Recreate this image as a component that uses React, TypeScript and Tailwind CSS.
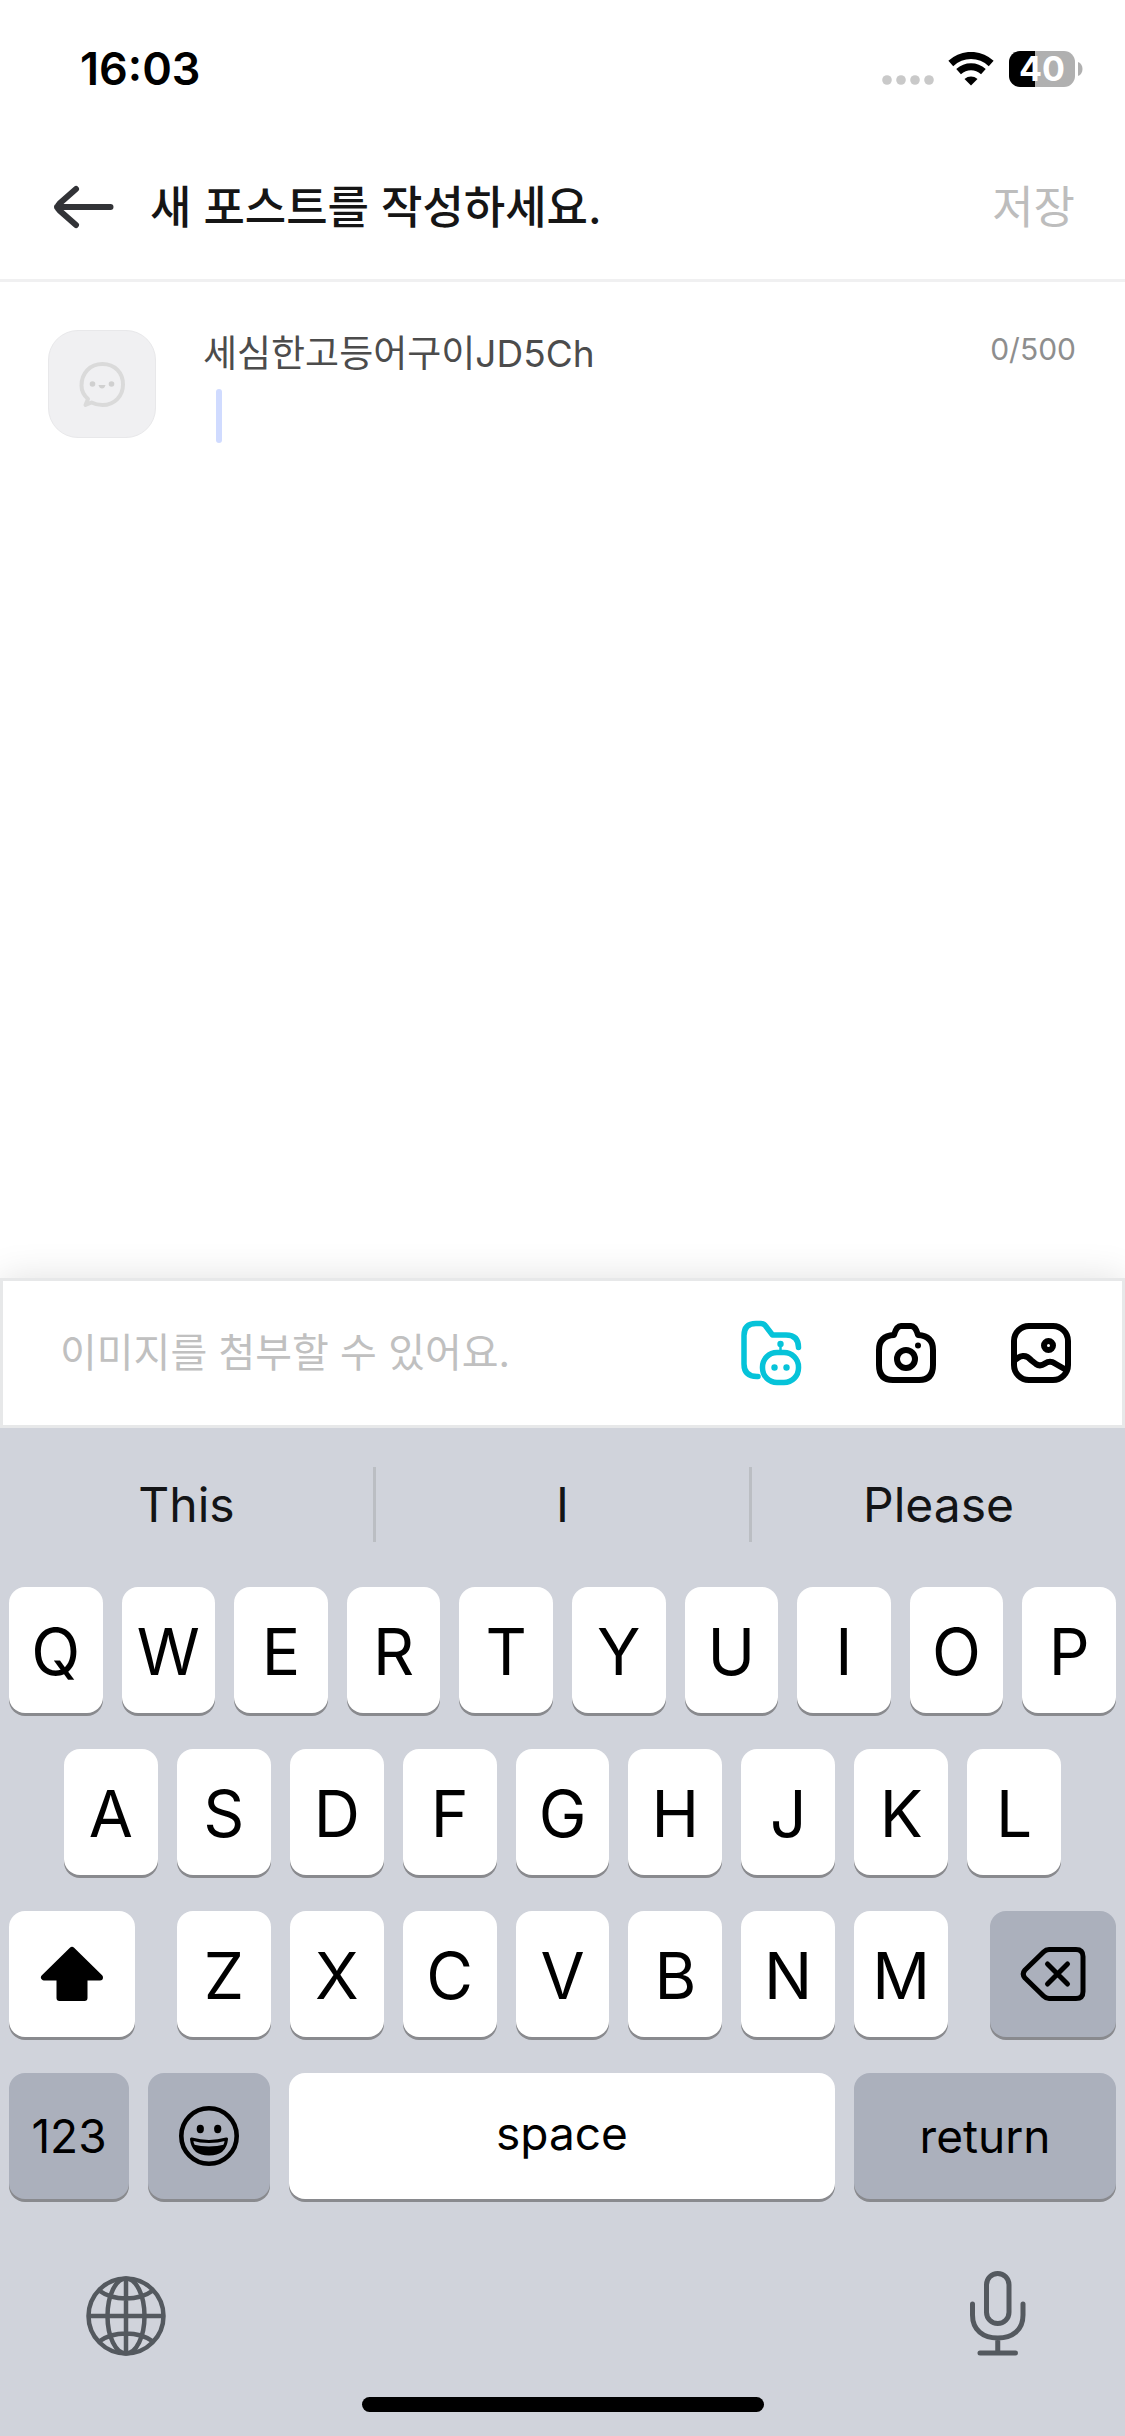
import React, { useState } from 'react';

const keyBase = "h-[126px] rounded-2xl flex items-center justify-center text-black shadow-[0_3px_0_#898a8e]";
const lightKey = `${keyBase} bg-white`;
const darkKey = `${keyBase} bg-[#abb0bc]`;

const topRow = ['Q', 'W', 'E', 'R', 'T', 'Y', 'U', 'I', 'O', 'P'];
const middleRow = ['A', 'S', 'D', 'F', 'G', 'H', 'J', 'K', 'L'];
const bottomRow = ['Z', 'X', 'C', 'V', 'B', 'N', 'M'];
const suggestions = ['This', 'I', 'Please'];

const StatusBar = () => (
  <div className="h-[137px] pl-20 pr-[42px] flex items-center justify-between">
    <span className="text-[45px] leading-[54px] font-semibold text-black">16:03</span>
    <div className="flex items-center">
      <svg width="52" height="36" viewBox="0 0 52 36" fill="#c9c9c9" className="mr-3.5" aria-hidden="true">
        <circle cx="5" cy="29" r="4.8" />
        <circle cx="19" cy="29" r="4.8" />
        <circle cx="33" cy="29" r="4.8" />
        <circle cx="47" cy="29" r="4.8" />
      </svg>
      <svg width="46" height="34" viewBox="0 0 46 34" fill="none" stroke="#000" className="mr-[15px]" aria-hidden="true">
        <path d="M2.8 11.5C14.5 .8 31.500 .8 43.200 11.500" strokeWidth="7.200" />
        <path d="M10.600 19.700C18 13 28 13 35.400 19.700" strokeWidth="7" />
        <path d="M23 33.500L16.500 27C20.300 23.700 25.700 23.700 29.500 27Z" fill="#000" stroke="none" />
      </svg>
      <div className="w-[66px] h-9 rounded-[11px] bg-linear-to-r from-black from-40% to-[#b0b0b0] to-40% text-white text-[34px] leading-9 font-bold text-center">40</div>
      <svg width="5" height="14" viewBox="0 0 5 14" fill="#b0b0b0" className="ml-[3px]" aria-hidden="true">
        <path d="M0 0C6 2 6 12 0 14Z" />
      </svg>
    </div>
  </div>
);

const Header = () => (
  <header className="h-[145px] pl-[51px] pr-[50px] flex items-center border-b-[3px] border-[#f0f0f1]">
    <button aria-label="뒤로">
      <svg width="66" height="48" viewBox="0 1 66 48" fill="none" stroke="#323337" strokeWidth="6" strokeLinecap="round" strokeLinejoin="round">
        <path d="M59.500 24H6M25 6L8.500 20.500Q5 24 8.500 27.500L25 42" />
      </svg>
    </button>
    <h1 className="ml-[33px] text-[45px] leading-[60px] font-medium text-[#151515]">새 포스트를 작성하세요.</h1>
    <button className="ml-auto text-[45px] leading-[60px] text-[#bdbdbd]">저장</button>
  </header>
);

const Avatar = () => (
  <div className="size-27 shrink-0 rounded-[30px] bg-[#f0f0f2] border border-[#e8e8ea] flex items-center justify-center">
    <svg width="48" height="48" viewBox="0 0 48 48" fill="none" stroke="#dadada" aria-hidden="true">
      <path d="M10 39C5.500 35 3.500 31 3.500 25.500C3.500 13 12 4 24.500 4S45 13 45 24.500S36.500 45 24.500 45C20 45 16.500 44 13.500 42.500L7.500 45Z" strokeWidth="4" strokeLinejoin="round" />
      <g fill="#d0d0d0" stroke="none">
        <circle cx="14.500" cy="24" r="2.800" />
        <circle cx="33.500" cy="24" r="2.800" />
        <path d="M20.500 25h7q-1 3.500-3.500 3.500t-3.500-3.500Z" />
      </g>
    </svg>
  </div>
);

const FolderIcon = () => (
  <svg width="66" height="66" viewBox="-3 -1 66 66" fill="none" stroke="#06c3d9" strokeWidth="5.500" strokeLinecap="round" strokeLinejoin="round">
    <path d="M17 55.500H16Q3 55.500 3 43V14.500Q3 2.500 15 2.500H20Q23 2.500 25 5.500L31.500 14H45Q57.500 14 57.500 26.500" />
    <rect x="21.500" y="31.500" width="36" height="30" rx="14.500" />
    <path d="M39.500 23V31" strokeWidth="2.500" />
    <g fill="#06c3d9" stroke="none">
      <circle cx="39.500" cy="23" r="3.200" />
      <circle cx="33.500" cy="46.500" r="3.200" />
      <circle cx="45.500" cy="46.500" r="3.200" />
    </g>
  </svg>
);

const CameraIcon = () => (
  <svg width="66" height="66" viewBox="0 0 66 66" fill="none" stroke="#000" strokeWidth="6" strokeLinejoin="round">
    <path d="M21 15Q23.500 6 28 6H38Q42.500 6 45 15Q60 16 60 30V45Q60 60 46 60H20Q6 60 6 45V30Q6 16 21 15Z" />
    <circle cx="33" cy="39" r="9" />
    <circle cx="45" cy="25.500" r="3" fill="#000" stroke="none" />
  </svg>
);

const ImageIcon = () => (
  <svg width="66" height="66" viewBox="0 0 66 66" fill="none" stroke="#000" strokeWidth="6">
    <rect x="6" y="6" width="54" height="54" rx="15" />
    <circle cx="40.500" cy="25.500" r="4.500" />
    <path d="M6 41C12 35 18 34 23 40L28 44Q32 47 37 43.500Q42 40 47 43.500L60 51" />
  </svg>
);

const KeyRow = ({ letters, className = '' }: { letters: string[]; className?: string }) => (
  <div className={`flex gap-[19px] ${className}`}>
    {letters.map(l => (
      <button key={l} className={`${lightKey} flex-1 pt-1 text-[64px] leading-[78px]`}>{l}</button>
    ))}
  </div>
);

const Keyboard = () => (
  <section className="bg-[#d0d3db] px-[9px] pb-6" aria-label="키보드">
    <div className="h-[153px] mb-1.5 -mx-[9px] flex items-center">
      {suggestions.map((word, i) => (
        <button key={word} className={`flex-1 h-[75px] text-[48px] leading-[75px] text-[#131416] ${i < 2 ? 'border-r-[3px] border-[#bbbec3]' : ''}`}>{word}</button>
      ))}
    </div>

    <div className="flex flex-col gap-9">
      <KeyRow letters={topRow} />
      <KeyRow letters={middleRow} className="px-[55px]" />
      <div className="flex gap-[42px]">
        <button aria-label="shift" className={`${lightKey} w-[126px]`}>
          <svg width="66" height="60" viewBox="0 0 66 60" stroke="#000" strokeWidth="6" strokeLinejoin="round">
            <path d="M33 6L5 33.500H20.500V54H45.500V33.500H61Z" />
          </svg>
        </button>
        <KeyRow letters={bottomRow} className="flex-1" />
        <button aria-label="delete" className={`${darkKey} w-[126px]`}>
          <svg width="68" height="60" viewBox="0 0 68 60" fill="none" stroke="#000" strokeWidth="5" strokeLinecap="round" strokeLinejoin="round">
            <path d="M30 5.500H57Q64 5.500 64 12.500V47.500Q64 54.500 57 54.500H30Q27 54.500 24.500 52L6 34Q2.500 30 6 26L24.500 8Q27 5.500 30 5.500Z" />
            <path d="M28.500 20L48.500 40M48.500 20L28.500 40" />
          </svg>
        </button>
      </div>
      <div className="flex gap-[19px]">
        <button className={`${darkKey} w-[120px] text-[46px] leading-[56px]`}>123</button>
        <button aria-label="emoji" className={`${darkKey} w-[122px]`}>
          <svg width="62" height="62" viewBox="0 0 62 62" fill="none" stroke="#000">
            <circle cx="31" cy="31" r="27.700" strokeWidth="4.600" />
            <ellipse cx="22.300" cy="24" rx="3.600" ry="4.200" fill="#000" stroke="none" />
            <ellipse cx="39.700" cy="24" rx="3.600" ry="4.200" fill="#000" stroke="none" />
            <path d="M13.500 34Q31 39 48.500 34Q47 49 31 49T13.500 34Z" strokeWidth="3" strokeLinejoin="round" />
            <path d="M15 39.500Q31 43.500 47 39.500Q43.500 49.500 31 49.500T15 39.500Z" fill="#000" stroke="none" />
          </svg>
        </button>
        <button className={`${lightKey} flex-1 pb-1.5 text-[46px] leading-[56px]`}>space</button>
        <button className={`${darkKey} w-[262px] text-[46px] leading-[56px]`}>return</button>
      </div>
    </div>

    <div className="pt-[72px] pl-[77px] pr-[89px] flex items-center justify-between">
      <button aria-label="언어">
        <svg width="80" height="88" viewBox="0 -2 80 88" fill="none" stroke="#54595f" strokeWidth="4.500">
          <circle cx="40" cy="43" r="37.500" />
          <ellipse cx="40" cy="43" rx="18.500" ry="37.500" />
          <path d="M40 5.500V80.500M2.500 43H77.500M13 17.500Q24 25.500 40 25.500T67 17.500M13 68.500Q24 60.500 40 60.500T67 68.500" />
        </svg>
      </button>
      <button aria-label="음성 입력">
        <svg width="58" height="88" viewBox="0 0 58 88" fill="none" stroke="#54595f" strokeWidth="5" strokeLinecap="round">
          <rect x="17.500" y="2.500" width="22.500" height="50" rx="11.250" />
          <path d="M3.500 33V44C3.500 59 14 67 28.750 67S54 59 54 44V33M28.750 67V82M11 82H46.500" />
        </svg>
      </button>
    </div>
    <div className="mt-[38px] mx-auto w-[402px] h-[15px] rounded-full bg-black" />
  </section>
);

const App = () => {
  const [post, setPost] = useState('');

  return (
    <div className="min-h-screen flex flex-col bg-white font-[Inter,'Noto_Sans_CJK_KR',sans-serif]">
      <StatusBar />
      <Header />

      <main className="flex-1 flex gap-[47px] pt-12 pl-12 pr-[49px]">
        <Avatar />
        <div className="flex-1 flex flex-col">
          <div className="flex items-start justify-between">
            <label htmlFor="post" className="text-[37px] leading-[48px] text-[#4c4c4c]">세심한고등어구이JD5Ch</label>
            <span className="text-[30px] leading-[39px] text-[#8e8e8e]">{post.length}/500</span>
          </div>
          <div className="flex-1 flex pt-[11px] pl-[13px]">
            {!post && <span className="w-1.5 h-[54px] rounded-full bg-[#d0dbff]" />}
            <textarea id="post" maxLength={500} value={post} onChange={e => setPost(e.target.value)} className="flex-1 resize-none outline-none text-[40px] leading-[54px] text-[#4c4c4c]" />
          </div>
        </div>
      </main>

      <div className="h-[150px] pl-[57px] pr-[48px] flex items-center border-[3px] border-[#e7e8e9] bg-white shadow-[0_0_36px_rgba(0,0,0,0.12)]">
        <p className="flex-1 text-[40px] leading-[52px] text-[#c0c0c0]">이미지를 첨부할 수 있어요.</p>
        <div className="flex gap-[69px]">
          <button aria-label="보관함"><FolderIcon /></button>
          <button aria-label="카메라"><CameraIcon /></button>
          <button aria-label="사진"><ImageIcon /></button>
        </div>
      </div>

      <Keyboard />
    </div>
  );
};
export default App;
